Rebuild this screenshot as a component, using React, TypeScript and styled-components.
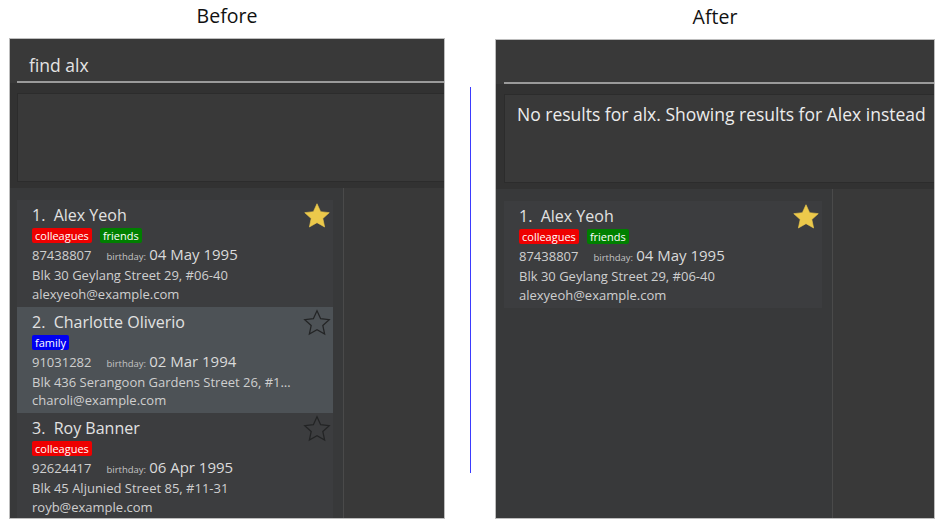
import React from 'react';
import styled, { createGlobalStyle } from 'styled-components';

const Global = createGlobalStyle`
  html, body { margin: 0; padding: 0; background: #ffffff; }
  body { font-family: "Open Sans", "Noto Sans", sans-serif; }
  * { box-sizing: border-box; }
`;

type Person = {
  name: string;
  tags: { label: string; color: string }[];
  phone: string;
  birthday: string;
  address: string;
  email: string;
  starred: boolean;
  selected?: boolean;
};

const alex: Person = {
  name: 'Alex Yeoh',
  tags: [
    { label: 'colleagues', color: '#ee0000' },
    { label: 'friends', color: '#007f00' },
  ],
  phone: '87438807',
  birthday: '04 May 1995',
  address: 'Blk 30 Geylang Street 29, #06-40',
  email: 'alexyeoh@example.com',
  starred: true,
};

const beforeList: Person[] = [
  alex,
  {
    name: 'Charlotte Oliverio',
    tags: [{ label: 'family', color: '#0000f0' }],
    phone: '91031282',
    birthday: '02 Mar 1994',
    address: 'Blk 436 Serangoon Gardens Street 26, #16-43',
    email: 'charoli@example.com',
    starred: false,
    selected: true,
  },
  {
    name: 'Roy Banner',
    tags: [{ label: 'colleagues', color: '#ee0000' }],
    phone: '92624417',
    birthday: '06 Apr 1995',
    address: 'Blk 45 Aljunied Street 85, #11-31',
    email: 'royb@example.com',
    starred: false,
  },
];

const Page = styled.div`
  width: 946px;
  height: 530px;
  display: flex;
  padding-left: 9px;
  background: #ffffff;
  overflow: hidden;
`;

const Column = styled.div<{ $w: number; $top: number }>`
  width: ${(p) => p.$w}px;
  display: flex;
  flex-direction: column;
  padding-top: ${(p) => p.$top}px;
`;

const Title = styled.div`
  height: 38px;
  line-height: 32px;
  text-align: center;
  font-family: "Open Sans", "Noto Sans", sans-serif;
  font-size: 19.5px;
  color: #111111;
`;

const Separator = styled.div`
  width: 50px;
  display: flex;
  justify-content: center;
  padding-top: 87px;
`;

const BlueLine = styled.div`
  width: 1px;
  height: 386px;
  background: #3b3bff;
`;

const Panel = styled.div<{ $h: number }>`
  height: ${(p) => p.$h}px;
  background: #393939;
  border: 1px solid #bdbdbd;
  display: flex;
  flex-direction: column;
  overflow: hidden;
`;

const CommandSection = styled.div<{ $inset: number }>`
  padding-left: ${(p) => p.$inset}px;
  background: #393939;
`;

const CommandInput = styled.div`
  height: 44px;
  padding: 14px 0 0 12px;
  font-size: 17.5px;
  line-height: 24px;
  color: #e4e4e4;
  border-bottom: 2px solid #9a9a9a;
`;

const ResultSection = styled.div<{ $inset: number }>`
  background: #323232;
  padding: 10px 0 6px ${(p) => p.$inset}px;
`;

const ResultBox = styled.div`
  height: 89px;
  background: #393939;
  border: 1px solid #2c2c2c;
  border-right: none;
  padding: 7px 0 0 12px;
  font-size: 17.5px;
  line-height: 24px;
  color: #ececec;
  white-space: nowrap;
`;

const ListSection = styled.div`
  flex: 1;
  display: flex;
  min-height: 0;
`;

const ListColumn = styled.div<{ $w: number; $inset: number }>`
  width: ${(p) => p.$w}px;
  padding: 12px 10px 0 ${(p) => p.$inset}px;
  background: #38393a;
  border-right: 1px solid #4a4a4a;
  display: flex;
  flex-direction: column;
`;

const Filler = styled.div`
  flex: 1;
  background: #393939;
`;

const Card = styled.div<{ $selected?: boolean }>`
  display: flex;
  padding: 5px 0 3px 15px;
  background: ${(p) => (p.$selected ? '#4d5256' : '#3c3d3f')};
  height: 106.5px;
  flex-shrink: 0;
`;

const Info = styled.div`
  flex: 1;
  min-width: 0;
  display: flex;
  flex-direction: column;
`;

const NameLine = styled.div`
  font-size: 16px;
  line-height: 20px;
  color: #e2e2e2;
  white-space: pre;
`;

const TagRow = styled.div`
  display: flex;
  gap: 8px;
  margin: 3px 0 2px;
  height: 15px;
`;

const Tag = styled.span<{ $color: string }>`
  background: ${(p) => p.$color};
  color: #ffffff;
  font-size: 11px;
  line-height: 15px;
  padding: 0 3px;
  border-radius: 2px;
`;

const DetailLine = styled.div`
  font-size: 13px;
  line-height: 19px;
  color: #cfcfcf;
  white-space: nowrap;
  overflow: hidden;
  text-overflow: ellipsis;
`;

const PhoneRow = styled.div`
  display: flex;
  align-items: baseline;
  line-height: 19px;
  color: #cfcfcf;
  white-space: nowrap;
`;

const Phone = styled.span`
  font-size: 13px;
`;

const BirthdayLabel = styled.span`
  font-size: 9.5px;
  margin-left: 15px;
  color: #c4c4c4;
`;

const BirthdayValue = styled.span`
  font-size: 15px;
  margin-left: 3px;
  color: #dadada;
`;

const StarBox = styled.div`
  width: 30px;
  height: 30px;
  margin: -4px 1px 0 5px;
  flex-shrink: 0;
`;

const Star = ({ filled }: { filled: boolean }) => (
  <svg width="30" height="30" viewBox="0 0 24 24">
    <path
      d="M12 2.2l2.9 6.35 6.9.75-5.15 4.7 1.45 6.8L12 17.3l-6.1 3.5 1.45-6.8L2.2 9.3l6.9-.75z"
      fill={filled ? '#ecc94b' : 'none'}
      stroke={filled ? '#ecc94b' : '#232425'}
      strokeWidth={filled ? 0.5 : 1}
      strokeLinejoin="miter"
    />
  </svg>
);

const PersonCard = ({ p, index }: { p: Person; index: number }) => (
  <Card $selected={p.selected}>
    <Info>
      <NameLine>{`${index}.  ${p.name}`}</NameLine>
      <TagRow>
        {p.tags.map((t) => (
          <Tag key={t.label} $color={t.color}>
            {t.label}
          </Tag>
        ))}
      </TagRow>
      <PhoneRow>
        <Phone>{p.phone}</Phone>
        <BirthdayLabel>birthday:</BirthdayLabel>
        <BirthdayValue>{p.birthday}</BirthdayValue>
      </PhoneRow>
      <DetailLine>{p.address}</DetailLine>
      <DetailLine>{p.email}</DetailLine>
    </Info>
    <StarBox>
      <Star filled={p.starred} />
    </StarBox>
  </Card>
);

const AppPanel = ({
  command,
  result,
  people,
  height,
  inset,
  listWidth,
}: {
  command: string;
  result: string;
  people: Person[];
  height: number;
  inset: number;
  listWidth: number;
}) => (
  <Panel $h={height}>
    <CommandSection $inset={inset}>
      <CommandInput>{command}</CommandInput>
    </CommandSection>
    <ResultSection $inset={inset}>
      <ResultBox>{result}</ResultBox>
    </ResultSection>
    <ListSection>
      <ListColumn $w={listWidth} $inset={inset}>
        {people.map((p, i) => (
          <PersonCard key={p.name} p={p} index={i + 1} />
        ))}
      </ListColumn>
      <Filler />
    </ListSection>
  </Panel>
);

export default function App() {
  return (
    <>
      <Global />
      <Page>
        <Column $w={436} $top={0}>
          <Title>Before</Title>
          <AppPanel
            command="find alx"
            result=""
            people={beforeList}
            height={481}
            inset={7}
            listWidth={334}
          />
        </Column>
        <Separator>
          <BlueLine />
        </Separator>
        <Column $w={440} $top={1}>
          <Title>After</Title>
          <AppPanel
            command=""
            result="No results for alx. Showing results for Alex instead"
            people={[alex]}
            height={480}
            inset={8}
            listWidth={337}
          />
        </Column>
      </Page>
    </>
  );
}
